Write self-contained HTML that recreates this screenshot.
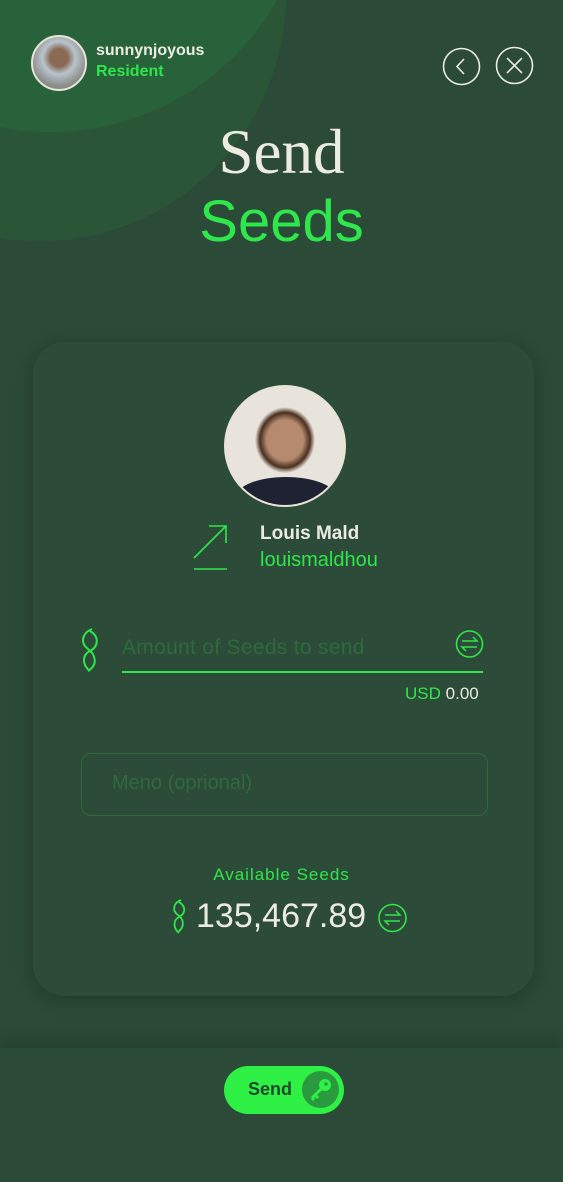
<!DOCTYPE html>
<html><head><meta charset="utf-8"><style>
*{margin:0;padding:0;box-sizing:border-box}
body{width:563px;height:1182px;background:#2b4a37;position:relative;overflow:hidden;font-family:"Liberation Sans",sans-serif}
.abs{position:absolute}
.c2{left:-206px;top:-251px;width:492px;height:492px;border-radius:50%;background:#2a5637}
.c1{left:-212px;top:-392px;width:524px;height:524px;border-radius:50%;background:#27623a}
.c3{left:-220px;top:-40px;width:330px;height:376px;border-radius:50%;background:#2c4c39;opacity:.6}
.card{left:33px;top:342px;width:501px;height:654px;border-radius:32px;background:#2c4b38;box-shadow:0 4px 18px rgba(0,0,0,.22)}
.bar{left:0;top:1048px;width:563px;height:134px;background:#2b4a37;box-shadow:0 -8px 14px rgba(0,0,0,.15)}
.green{color:#2ee74a}
</style></head><body>
<div class="abs c3"></div>
<div class="abs c2"></div>
<div class="abs c1"></div>

<div class="abs" style="left:31px;top:35px;width:56px;height:56px;border-radius:50%;border:2px solid #e8e4d4;background:radial-gradient(circle at 50% 40%,#8a6a55 0 22%,#b8c4cc 40%,#8a8c8a 70%)"></div>
<div class="abs" style="left:96px;top:42px;color:#ecebe0;font-weight:bold;font-size:16px">sunnynjoyous</div>
<div class="abs green" style="left:96px;top:63px;font-weight:bold;font-size:16px">Resident</div>

<svg class="abs" style="left:442px;top:47px" width="40" height="40"><circle cx="19.5" cy="19.5" r="18" fill="none" stroke="#ecebe0" stroke-width="1.6"/><path d="M22 12 L15 19.5 L22 27" fill="none" stroke="#ecebe0" stroke-width="1.6"/></svg>
<svg class="abs" style="left:495px;top:46px" width="40" height="40"><circle cx="19.5" cy="19.5" r="18" fill="none" stroke="#ecebe0" stroke-width="1.6"/><path d="M12 12 L27 27 M27 12 L12 27" fill="none" stroke="#ecebe0" stroke-width="1.6"/></svg>

<div class="abs" style="left:0;width:563px;top:116px;text-align:center;font-family:'Liberation Serif',serif;font-size:63px;color:#ecebe0">Send</div>
<div class="abs green" style="left:0;width:563px;top:188px;text-align:center;font-size:58px">Seeds</div>

<div class="abs card"></div>
<div class="abs" style="left:224px;top:385px;width:122px;height:122px;border-radius:50%;border:2px solid #e8e4d4;background:radial-gradient(ellipse at 50% 45%,#b58a6e 0 22%,#4a3020 30%,#e8e4dc 36%);overflow:hidden"><div style="position:absolute;left:10px;top:90px;width:100px;height:40px;border-radius:50%;background:#1f2232"></div></div>

<svg class="abs" style="left:193px;top:525px" width="36" height="46"><path d="M1 33 L33 1 M16 1 H33 V18 M1 44 H34" fill="none" stroke="#2ee74a" stroke-width="1.6"/></svg>
<div class="abs" style="left:260px;top:523px;color:#ecebe0;font-weight:bold;font-size:19px">Louis Mald</div>
<div class="abs green" style="left:260px;top:549px;font-size:20px">louismaldhou</div>

<svg class="abs" style="left:80px;top:627px" width="22" height="48"><path d="M12 2 C2 6 0 16 8 22 C16 28 18 38 8 44 M10 4 C20 10 18 20 10 24 C2 28 2 38 10 44" fill="none" stroke="#2ee74a" stroke-width="2"/></svg>
<div class="abs" style="left:122px;top:636px;font-size:21px;letter-spacing:.3px;color:#2f6a3c">Amount of Seeds to send</div>
<div class="abs" style="left:122px;top:671px;width:361px;height:2px;background:#2ee74a"></div>
<svg class="abs" style="left:455px;top:629px" width="30" height="30"><circle cx="14.5" cy="15" r="13" fill="none" stroke="#2ee74a" stroke-width="1.6"/><path d="M7 12 H22 L18 8 M22 18 H7 L11 22" fill="none" stroke="#2ee74a" stroke-width="1.5"/></svg>
<div class="abs" style="left:405px;top:684px;font-size:17px"><span class="green">USD</span> <span style="color:#ecebe0">0.00</span></div>

<div class="abs" style="left:81px;top:753px;width:407px;height:63px;border:1px solid #2f6a3c;border-radius:10px"></div>
<div class="abs" style="left:112px;top:772px;font-size:20px;color:#2f6a3c">Meno (oprional)</div>

<div class="abs green" style="left:0;width:563px;top:865px;text-align:center;font-size:17px;letter-spacing:1px">Available Seeds</div>
<svg class="abs" style="left:172px;top:899px" width="16" height="36"><path d="M9 1 C1 4 0 12 6 16 C12 20 13 28 6 33 M7 3 C15 8 13 15 7 18 C1 21 1 29 7 34" fill="none" stroke="#2ee74a" stroke-width="1.8"/></svg>
<div class="abs" style="left:196px;top:897px;font-size:34px;color:#ecebe0">135,467.89</div>
<svg class="abs" style="left:377px;top:902px" width="32" height="32"><circle cx="15.5" cy="16" r="13.5" fill="none" stroke="#2ee74a" stroke-width="1.6"/><path d="M8 13 H23 L19 9 M23 19 H8 L12 23" fill="none" stroke="#2ee74a" stroke-width="1.5"/></svg>

<div class="abs bar"></div>
<div class="abs" style="left:224px;top:1066px;width:120px;height:48px;border-radius:24px;background:#2ff045"></div>
<div class="abs" style="left:248px;top:1079px;font-weight:bold;font-size:18px;color:#1f4a2c">Send</div>
<div class="abs" style="left:302px;top:1071px;width:37px;height:37px;border-radius:50%;background:#2a9a3e"></div>
<svg class="abs" style="left:306px;top:1075px" width="30" height="30"><circle cx="19" cy="10" r="6" fill="#2ff045"/><path d="M15 14 L6 23 M9 20 L12 23 M6 23 L8 25" stroke="#2ff045" stroke-width="3" fill="none"/><circle cx="20" cy="9" r="1.8" fill="#2a9a3e"/></svg>
</body></html>
